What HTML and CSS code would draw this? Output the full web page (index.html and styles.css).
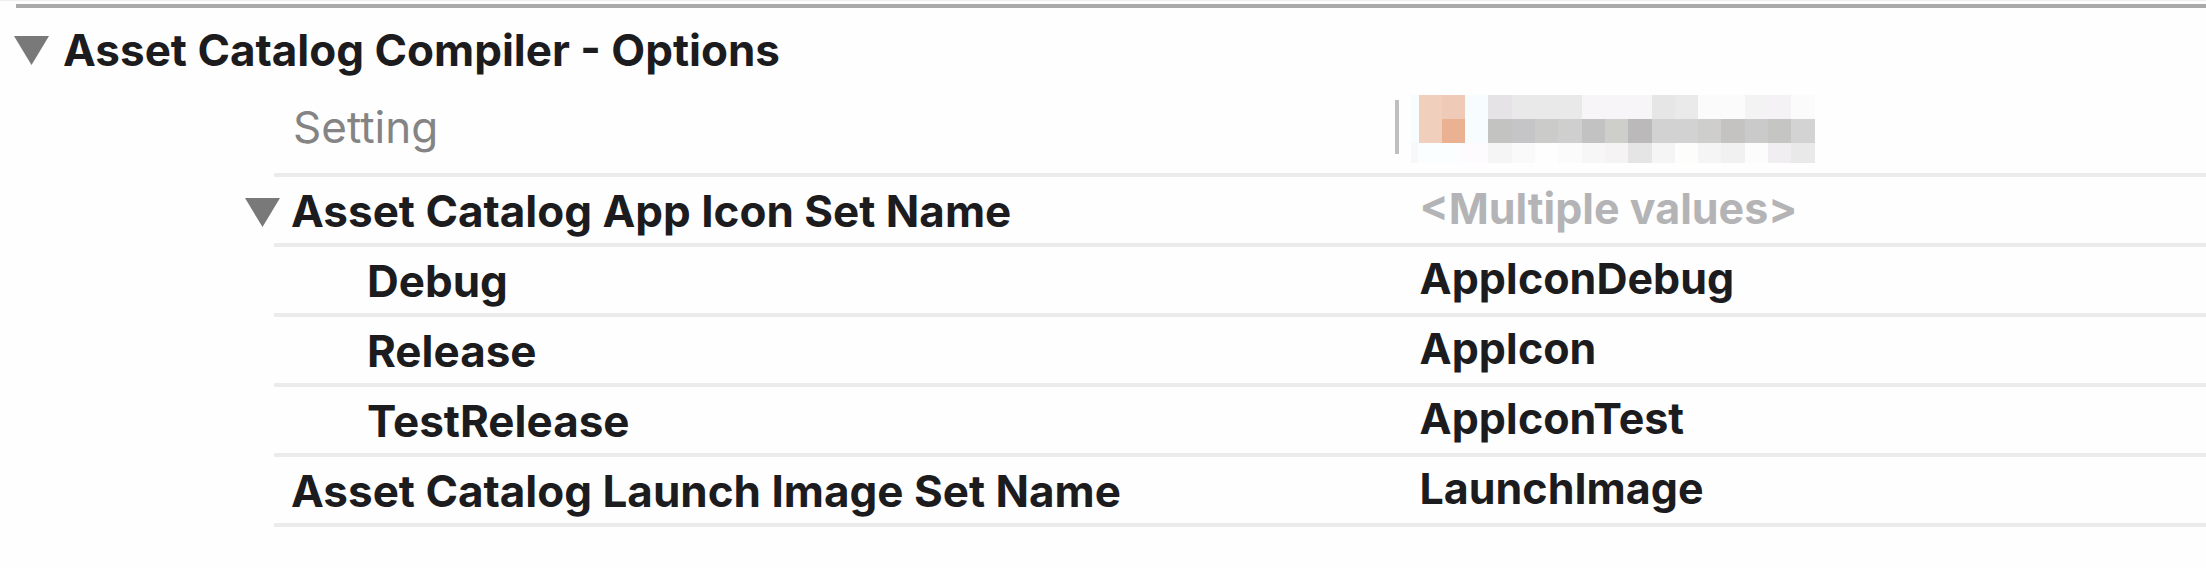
FILE: index.html
```
<!DOCTYPE html>
<html lang="en">
<head>
    <meta charset="UTF-8">
    <meta name="viewport" content="width=device-width, initial-scale=1.0">
    <title>Build Settings</title>
    <link rel="stylesheet" href="styles.css">
</head>
<body>

    <section class="group">
        <h1 class="group-title">
            <button type="button" class="toggle" aria-label="Collapse group">
                <svg viewBox="0 0 35 29"><path d="M0 0h35L17.5 29z"/></svg>
            </button>
            Asset Catalog Compiler - Options
        </h1>

        <table class="settings">
            <thead>
                <tr>
                    <th class="name" scope="col">Setting</th>
                    <th class="target" scope="col">
                        <div class="target-box">
                            <svg class="mosaic" viewBox="0 0 404 68" shape-rendering="crispEdges" role="img" aria-label="Target">
                                <path fill="#f7fcff" d="M0 0h77v48H0z"/>
                                <path fill="#fbfeff" d="M7 48h40v20H7z"/>
                                <path fill="#f8f8f8" d="M0 48h7v20H0z"/>
                                <path fill="#fdfbfd" d="M47 48h30v20H47z"/>
                                <path fill="#f0cfbd" d="M8 0h23v48H8z"/>
                                <path fill="#efcab7" d="M31 0h23v24H31z"/>
                                <path fill="#eab292" d="M31 24h23v24H31z"/>
                                <!-- top row -->
                                <path fill="#e5e3e5" d="M77 0h24v24H77z"/>
                                <path fill="#e9e9e9" d="M101 0h70v24h-70z"/>
                                <path fill="#f7f5f7" d="M171 0h70v24h-70z"/>
                                <path fill="#e6e6e6" d="M241 0h23v24h-23z"/>
                                <path fill="#eaeaea" d="M264 0h23v24h-23z"/>
                                <path fill="#fbfbfb" d="M287 0h47v24h-47z"/>
                                <path fill="#f3f3f3" d="M334 0h23v24h-23z"/>
                                <path fill="#f4f2f4" d="M357 0h23v24h-23z"/>
                                <path fill="#fbfbfb" d="M380 0h24v24h-24z"/>
                                <!-- middle row -->
                                <path fill="#c3c3c2" d="M77 24h24v24H77z"/>
                                <path fill="#c5c5c7" d="M101 24h23v24h-23z"/>
                                <path fill="#cbcbc9" d="M124 24h23v24h-23z"/>
                                <path fill="#cfcfcf" d="M147 24h24v24h-24z"/>
                                <path fill="#c2c2c3" d="M171 24h23v24h-23z"/>
                                <path fill="#cececb" d="M194 24h23v24h-23z"/>
                                <path fill="#bcb9bb" d="M217 24h24v24h-24z"/>
                                <path fill="#d2d2d2" d="M241 24h46v24h-46z"/>
                                <path fill="#cececc" d="M287 24h23v24h-23z"/>
                                <path fill="#c5c3c2" d="M310 24h24v24h-24z"/>
                                <path fill="#cacacb" d="M334 24h23v24h-23z"/>
                                <path fill="#c5c5c4" d="M357 24h23v24h-23z"/>
                                <path fill="#d3d3d3" d="M380 24h24v24h-24z"/>
                                <!-- bottom row -->
                                <path fill="#f6f5f6" d="M77 48h24v20H77z"/>
                                <path fill="#fafafa" d="M101 48h23v20h-23z"/>
                                <path fill="#fefefe" d="M124 48h23v20h-23z"/>
                                <path fill="#fbfbfb" d="M147 48h24v20h-24z"/>
                                <path fill="#f7f7f8" d="M171 48h23v20h-23z"/>
                                <path fill="#f6f3f5" d="M194 48h23v20h-23z"/>
                                <path fill="#e5e5e6" d="M217 48h24v20h-24z"/>
                                <path fill="#f6f5f6" d="M241 48h23v20h-23z"/>
                                <path fill="#fdfdfc" d="M264 48h23v20h-23z"/>
                                <path fill="#f5f5f5" d="M287 48h23v20h-23z"/>
                                <path fill="#f1f1f1" d="M310 48h24v20h-24z"/>
                                <path fill="#fcfcfc" d="M334 48h23v20h-23z"/>
                                <path fill="#f0eef0" d="M357 48h23v20h-23z"/>
                                <path fill="#e9e9e9" d="M380 48h24v20h-24z"/>
                            </svg>
                        </div>
                    </th>
                </tr>
            </thead>
            <tbody>
                <tr>
                    <th class="name" scope="row">
                        <button type="button" class="toggle" aria-label="Collapse setting">
                            <svg viewBox="0 0 35 29"><path d="M0 0h35L17.5 29z"/></svg>
                        </button>Asset Catalog App Icon Set Name
                    </th>
                    <td class="mixed">&lt;Multiple values&gt;</td>
                </tr>
                <tr>
                    <th class="name child" scope="row">Debug</th>
                    <td>AppIconDebug</td>
                </tr>
                <tr>
                    <th class="name child" scope="row">Release</th>
                    <td>AppIcon</td>
                </tr>
                <tr>
                    <th class="name child" scope="row">TestRelease</th>
                    <td>AppIconTest</td>
                </tr>
                <tr>
                    <th class="name" scope="row">Asset Catalog Launch Image Set Name</th>
                    <td>LaunchImage</td>
                </tr>
            </tbody>
        </table>
    </section>

</body>
</html>
```

FILE: styles.css
```
* {
    box-sizing: border-box;
}
body {
    margin: 0;
    border-top: 1px solid #eeeeee;
    background-color: #fefefe;
    color: #1c1c1e;
    font-family: Inter, "Liberation Sans", sans-serif;
    font-size: 44px;
    font-weight: 700;
    line-height: 62px;
}
.group {
    margin: 3px 0 0 16px;
    border-top: 4px solid #a9a9a9;
}
.group-title {
    display: flex;
    align-items: center;
    gap: 14px;
    height: 70px;
    margin: 7px 0 0 -2px;
    font-size: 44px;
    font-weight: 700;
}
.toggle {
    width: 35px;
    height: 29px;
    padding: 0;
    border: none;
    background: none;
    cursor: pointer;
}
.toggle svg {
    display: block;
    width: 35px;
    height: 29px;
    fill: #797979;
}
.settings {
    width: calc(100% - 258px);
    margin-left: 258px;
    border-spacing: 0;
    table-layout: fixed;
}
.settings th,
.settings td {
    height: 70px;
    padding: 0;
    border-bottom: 4px solid #ebebeb;
    text-align: left;
    white-space: nowrap;
}
.settings .name {
    width: 58%;
    padding-top: 3px;
    padding-bottom: 1px;
    padding-left: 17px;
}
.settings .child {
    padding-left: 93px;
}
.settings td {
    padding: 0 0 4px 25px;
    font-size: 43px;
}
.settings .mixed {
    color: #b4b4b6;
}
.settings thead th {
    height: 92px;
    padding-bottom: 4px;
    color: #848484;
    font-weight: 400;
}
.settings thead .name {
    padding: 0 0 4px 19px;
}
.settings .name .toggle {
    margin: 0 11px 2px -46px;
}
.target-box {
    display: flex;
    align-items: center;
    gap: 12px;
}
.target-box::before {
    content: "";
    width: 4px;
    height: 54px;
    background-color: #bfbfbf;
}
.mosaic {
    width: 404px;
    height: 68px;
    margin-top: 3px;
}
```
